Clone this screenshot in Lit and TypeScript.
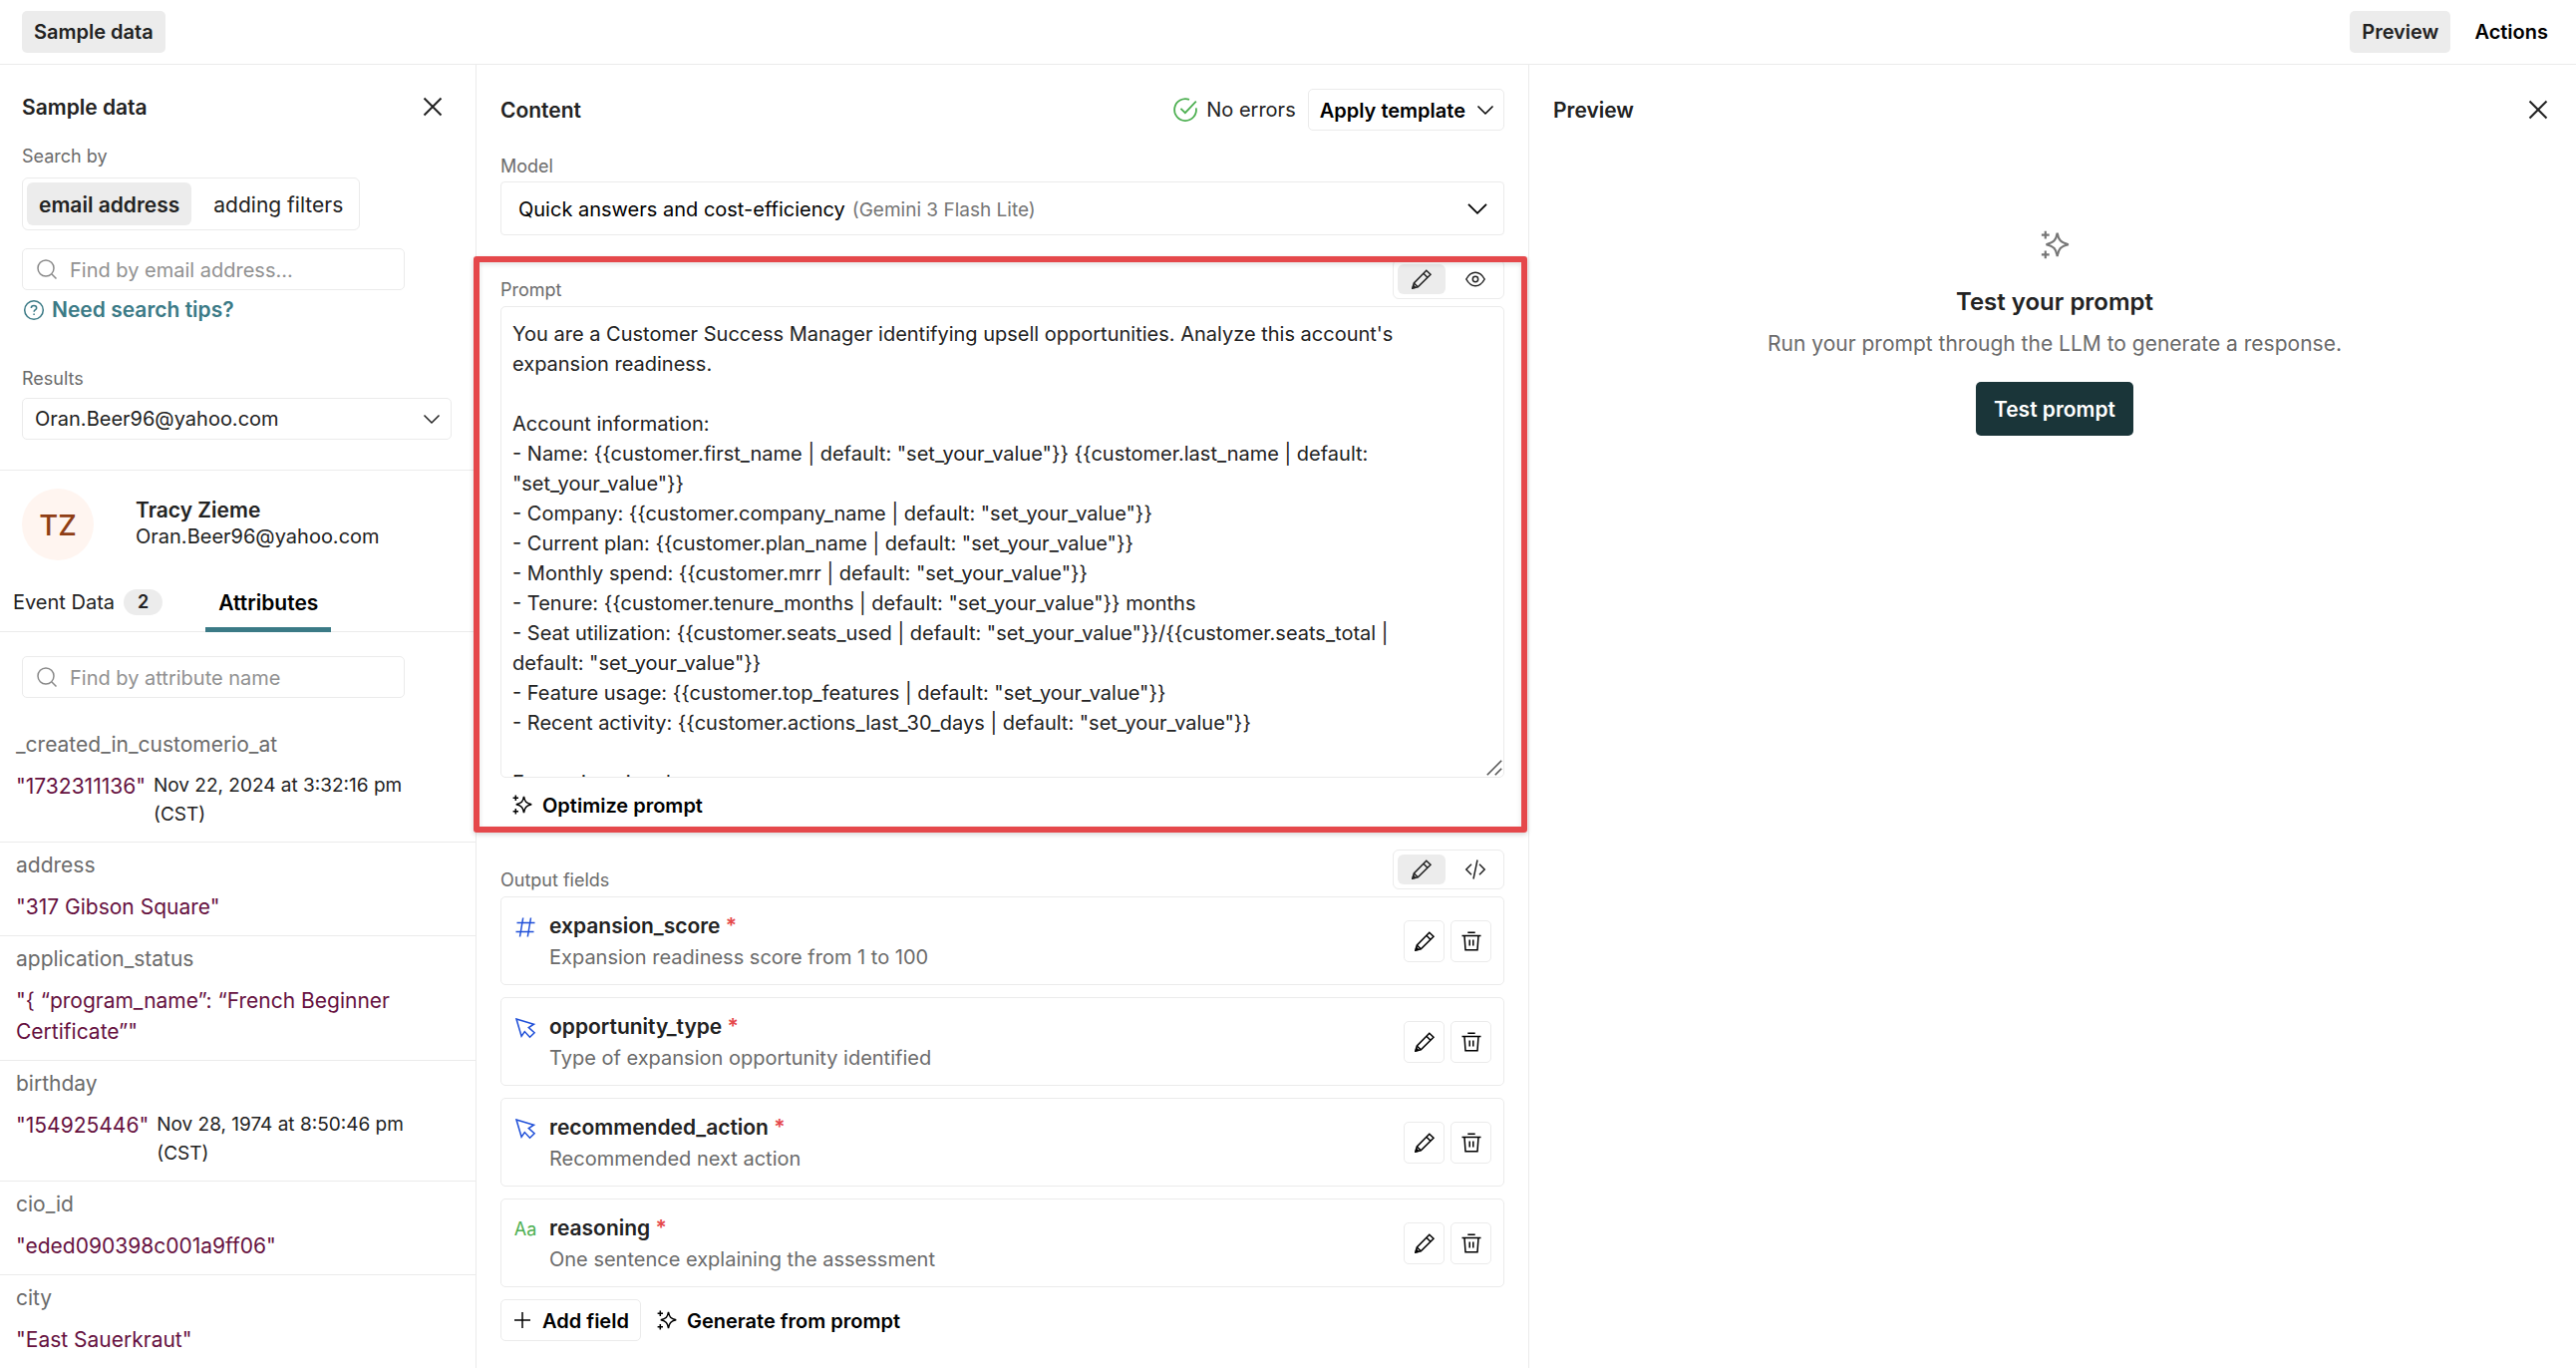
import { LitElement, html, css, svg, nothing } from "lit";
import { customElement } from "lit/decorators.js";
import { classMap } from "lit/directives/class-map.js";

const icons = {
  close: svg`<path d="M1.500 1.500l17 17M18.500 1.500l-17 17" stroke-width="2"/>`,
  chevron: svg`<path d="M2.500 6.500l7.500 7.500 7.500-7.500"/>`,
  search: svg`<circle cx="9" cy="9" r="8"/><path d="M15 15l4.500 4.500"/>`,
  help: svg`<circle cx="10" cy="10" r="9.300"/><path d="M7.300 8c0-1.500 1.200-2.500 2.700-2.500s2.700 1 2.700 2.400c0 1.700-2.600 1.900-2.600 3.900"/><path d="M10.100 13.600v1.300"/>`,
  check: svg`<path d="M13.300 1.600A9.100 9.100 0 1 0 19 8.600"/><path d="M6.200 9l3.700 3.700L19 3"/>`,
  pencil: svg`<path d="M1 19l1.300-5L14.800 1.300l4.200 4L6.300 17.800z"/><path d="M11.900 4.300l4 4M2.300 14l4 3.800"/><path d="M1 19l.7-2.600 1.900 1.900z" fill="currentColor"/>`,
  eye: svg`<path d="M.8 10C3 6 6 3.300 10 3.300S17 6 19.200 10C17 14 14 16.700 10 16.700S3 14 .8 10z"/><circle cx="10" cy="10" r="2.700"/>`,
  code: svg`<path d="M6 4.800L.8 10 6 15.200M14 4.800l5.200 5.200-5.200 5.200M12 .5L8 19.500"/>`,
  trash: svg`<path d="M6.300 1.200h7.400M.5 4.500h19M3 4.500l1 14.300h12l1-14.300"/><path d="M8.200 8.500v6M11.800 8.500v6"/>`,
  sparkle: svg`<path d="M11.500 1.800c.9 5 2.200 6.600 7.700 8-5.500 1.400-6.800 3-7.700 8.200-.9-5.200-2.200-6.800-7.700-8.200 5.500-1.400 6.800-3 7.700-8z"/><path d="M3.300.5v5.400M.6 3.200H6M3.300 14.100v5.400M.6 16.800H6"/>`,
  plus: svg`<path d="M10 2v16M2 10h16"/>`,
  hash: svg`<path d="M7.700.5L4.500 19.500M15.500.5l-3.200 19M1.500 5.600h18M.5 14.400h18"/>`,
  cursor: svg`<path d="M1 1l17.500 5.200-5.200 3.300 5.800 5.200-4.600 4.500-5.200-5.600-3.200 4.600z"/>`,
  grip: svg`<path d="M1 19L19 1M11 19l8-8"/>`,
};

const icon = (name: keyof typeof icons, size = "md") =>
  html`<svg class="icon ${size}" viewBox="0 0 20 20" aria-hidden="true">${icons[name]}</svg>`;

interface Attribute {
  name: string;
  value: string;
  date?: string;
}

const attributes: Attribute[] = [
  { name: "_created_in_customerio_at", value: '"1732311136"', date: "Nov 22, 2024 at 3:32:16 pm (CST)" },
  { name: "address", value: '"317 Gibson Square"' },
  { name: "application_status", value: '"{ “program_name”: “French Beginner Certificate”"' },
  { name: "birthday", value: '"154925446"', date: "Nov 28, 1974 at 8:50:46 pm (CST)" },
  { name: "cio_id", value: '"eded090398c001a9ff06"' },
  { name: "city", value: '"East Sauerkraut"' },
];

const fields = [
  { type: "number", name: "expansion_score", description: "Expansion readiness score from 1 to 100" },
  { type: "choice", name: "opportunity_type", description: "Type of expansion opportunity identified" },
  { type: "choice", name: "recommended_action", description: "Recommended next action" },
  { type: "text", name: "reasoning", description: "One sentence explaining the assessment" },
];

const promptText = `You are a Customer Success Manager identifying upsell opportunities. Analyze this account's expansion readiness.

Account information:
- Name: {{customer.first_name | default: "set_your_value"}} {{customer.last_name | default: "set_your_value"}}
- Company: {{customer.company_name | default: "set_your_value"}}
- Current plan: {{customer.plan_name | default: "set_your_value"}}
- Monthly spend: {{customer.mrr | default: "set_your_value"}}
- Tenure: {{customer.tenure_months | default: "set_your_value"}} months
- Seat utilization: {{customer.seats_used | default: "set_your_value"}}/{{customer.seats_total | default: "set_your_value"}}
- Feature usage: {{customer.top_features | default: "set_your_value"}}
- Recent activity: {{customer.actions_last_30_days | default: "set_your_value"}}

Expansion signals:`;

const base = css`
  * {
    box-sizing: border-box;
  }
  h2, h3, p, dl, dt, dd {
    margin: 0;
    font: inherit;
  }
  button, input, select, textarea {
    margin: 0;
    padding: 0;
    border: 0;
    background: none;
    color: inherit;
    font: inherit;
  }
  button {
    cursor: pointer;
    white-space: nowrap;
  }
  .icon {
    flex: none;
    width: 20px;
    height: 20px;
    fill: none;
    stroke: currentColor;
    stroke-width: 1.5;
    overflow: visible;
  }
  .icon.sm {
    width: 16px;
    height: 16px;
    stroke-width: 2;
  }
  .icon.lg {
    width: 24px;
    height: 24px;
  }
  .icon.xl {
    width: 29px;
    height: 29px;
  }
  .title {
    padding-top: 2px;
    font-size: 21px;
    font-weight: 600;
    line-height: 30px;
  }
  .label {
    display: block;
    color: #6b6b6b;
    font-size: 18px;
    line-height: 24px;
  }
  .close {
    display: flex;
    padding: 4px;
  }
  .btn {
    display: inline-flex;
    align-items: center;
    gap: 10px;
    height: 42px;
    padding: 0 11px;
    border: 1px solid transparent;
    border-radius: 5px;
    color: #000;
    font-size: 20px;
    font-weight: 600;
  }
  .btn span {
    padding-top: 2px;
  }
  .btn.outlined {
    border-color: #ebebeb;
  }
  .btn.selected {
    background: #ececec;
    color: #222;
  }
  .segments {
    display: inline-flex;
    gap: 10px;
    padding: 4px;
    border: 1px solid #ebebeb;
    border-radius: 6px;
  }
  .segment {
    display: flex;
    align-items: center;
    justify-content: center;
    height: 43px;
    padding: 2px 12px 0;
    border-radius: 6px;
    font-size: 21px;
  }
  .segment.selected {
    background: #ececec;
    font-weight: 600;
  }
`;

@customElement("sample-panel")
export class SamplePanel extends LitElement {
  static styles = [
    base,
    css`
      :host {
        display: block;
        border-right: 1px solid #ebebeb;
      }
      .lookup {
        display: flex;
        flex-direction: column;
        align-items: flex-start;
        padding: 26px 24px 30px 22px;
        border-bottom: 1px solid #ebebeb;
      }
      .head {
        display: flex;
        align-items: center;
        justify-content: space-between;
        align-self: stretch;
        margin-bottom: 22px;
        padding-right: 5px;
      }
      .segments {
        margin: 9px 0 18px;
      }
      .search {
        display: flex;
        align-items: center;
        gap: 13px;
        width: 384px;
        max-width: 100%;
        height: 42px;
        padding: 0 14px;
        border: 1px solid #ebebeb;
        border-radius: 5px;
        color: #8a8a8a;
      }
      .search input {
        flex: 1;
        min-width: 0;
        padding-top: 2px;
        outline: none;
      }
      .search input::placeholder {
        color: #919191;
        opacity: 1;
      }
      .help {
        display: flex;
        align-items: center;
        gap: 8px;
        margin: 5px 2px 42px;
        color: #3b7a86;
        font-size: 21px;
        font-weight: 600;
        line-height: 30px;
        text-decoration: none;
      }
      .picker {
        display: grid;
        align-items: center;
        align-self: stretch;
        margin-top: 7px;
        border: 1px solid #ebebeb;
        border-radius: 5px;
      }
      .picker select {
        grid-area: 1 / 1;
        height: 40px;
        padding: 0 40px 0 12px;
        appearance: none;
      }
      .picker .icon {
        grid-area: 1 / 1;
        justify-self: end;
        margin-right: 9px;
        pointer-events: none;
      }
      .person {
        display: flex;
        align-items: center;
        gap: 42px;
        padding: 18px 22px 17px;
        line-height: 27px;
      }
      .identity {
        padding-bottom: 2px;
      }
      .avatar {
        display: grid;
        place-items: center;
        width: 72px;
        height: 72px;
        border-radius: 50%;
        background: #fff5f0;
        color: #8f3e15;
        font-size: 29px;
        font-weight: 500;
      }
      .name {
        font-size: 21px;
        font-weight: 600;
      }
      .tabs {
        display: flex;
        gap: 43px;
        padding: 0 13px;
        border-bottom: 1px solid #ebebeb;
      }
      .tab {
        display: flex;
        align-items: center;
        gap: 9px;
        height: 55px;
        border-bottom: 5px solid transparent;
        margin-bottom: -1px;
      }
      .tab.selected {
        padding-inline: 13px;
        border-color: #3b7a86;
        color: #000;
        font-size: 21px;
        font-weight: 600;
      }
      .badge {
        padding: 0 14px;
        border-radius: 13px;
        background: #ececec;
        font-size: 18px;
        font-weight: 600;
        line-height: 26px;
      }
      .filter {
        padding: 24px 22px;
      }
      .attribute {
        padding: 7px 40px 13px 16px;
        border-bottom: 1px solid #ebebeb;
        font-size: 21px;
        line-height: 31px;
      }
      .attribute:last-child {
        padding-bottom: 8px;
        border-bottom: 0;
      }
      .attribute dt {
        margin-bottom: 11px;
        color: #6b6b6b;
      }
      .attribute dd {
        display: flex;
        gap: 8px;
      }
      .value {
        color: #66113f;
      }
      .date {
        font-size: 19px;
        line-height: 29px;
      }
    `,
  ];

  render() {
    return html`
      <section class="lookup">
        <div class="head">
          <h2 class="title">Sample data</h2>
          <button class="close" aria-label="Close sample data">${icon("close")}</button>
        </div>
        <span class="label" id="search-by">Search by</span>
        <div class="segments" role="group" aria-labelledby="search-by">
          <button class="segment selected" aria-pressed="true">email address</button>
          <button class="segment" aria-pressed="false">adding filters</button>
        </div>
        <label class="search">
          ${icon("search")}
          <input type="search" placeholder="Find by email address..." aria-label="Find by email address" />
        </label>
        <a class="help" href="#search-tips">${icon("help")}<span>Need search tips?</span></a>
        <label class="label" for="results">Results</label>
        <div class="picker">
          <select id="results">
            <option>Oran.Beer96@yahoo.com</option>
          </select>
          ${icon("chevron")}
        </div>
      </section>
      <section>
        <div class="person">
          <span class="avatar">TZ</span>
          <div class="identity">
            <p class="name">Tracy Zieme</p>
            <p>Oran.Beer96@yahoo.com</p>
          </div>
        </div>
        <div class="tabs" role="tablist">
          <button class="tab" role="tab" aria-selected="false">
            <span>Event Data</span><span class="badge">2</span>
          </button>
          <button class="tab selected" role="tab" aria-selected="true">Attributes</button>
        </div>
        <div class="filter">
          <label class="search">
            ${icon("search")}
            <input type="search" placeholder="Find by attribute name" aria-label="Find by attribute name" />
          </label>
        </div>
        <dl>
          ${attributes.map(
            (a) => html`
              <div class="attribute">
                <dt>${a.name}</dt>
                <dd>
                  <span class="value">${a.value}</span>
                  ${a.date ? html`<span class="date">${a.date}</span>` : nothing}
                </dd>
              </div>
            `,
          )}
        </dl>
      </section>
    `;
  }
}

@customElement("content-panel")
export class ContentPanel extends LitElement {
  static styles = [
    base,
    css`
      :host {
        display: flex;
        flex-direction: column;
        gap: 24px;
        min-width: 0;
        padding: 24px;
        border-right: 1px solid #ebebeb;
      }
      .head {
        display: flex;
        align-items: center;
      }
      .status {
        display: flex;
        align-items: center;
        gap: 9px;
        margin: 0 12px 0 auto;
      }
      .status .icon {
        color: #4caf50;
      }
      .head .btn .icon {
        margin-right: -3px;
      }
      .model {
        display: flex;
        align-items: center;
        gap: 7px;
        height: 54px;
        margin-top: 3px;
        padding: 0 14px 0 17px;
        border: 1px solid #ebebeb;
        border-radius: 4px;
        color: #000;
      }
      .model select,
      .vendor {
        padding-top: 2px;
      }
      .model select {
        appearance: none;
        field-sizing: content;
      }
      .vendor {
        flex: 1;
        color: #757575;
        font-size: 19px;
      }
      .bar {
        display: flex;
        align-items: flex-end;
        justify-content: space-between;
        height: 47px;
        padding-bottom: 4px;
      }
      .bar .segments {
        align-self: flex-start;
        gap: 6px;
      }
      .bar .segment {
        width: 48px;
        height: 30px;
        padding: 0;
      }
      .prompt {
        position: relative;
      }
      .highlight {
        position: absolute;
        inset: -3px -23px -7px -27px;
        z-index: 1;
        border: 6px solid #e5484b;
        border-radius: 3px;
        box-shadow: 0 2px 5px rgb(0 0 0 / 16%), inset 0 2px 5px rgb(0 0 0 / 12%);
        pointer-events: none;
      }
      .editor {
        position: relative;
        display: flex;
        margin-bottom: 6px;
      }
      .editor textarea {
        flex: 1;
        height: 473px;
        padding: 12px 48px 0 11px;
        border: 1px solid #ebebeb;
        border-radius: 5px;
        line-height: 30px;
        outline: none;
        resize: none;
        scrollbar-width: none;
        overflow: hidden;
      }
      .editor .icon {
        position: absolute;
        right: 2px;
        bottom: 2px;
        color: #555;
      }
      .fields {
        display: grid;
        gap: 12px;
      }
      .field {
        display: flex;
        align-items: center;
        gap: 6px;
        padding: 12px;
        border: 1px solid #ebebeb;
        border-radius: 5px;
        line-height: 30px;
      }
      .kind {
        display: grid;
        place-items: center;
        align-self: flex-start;
        width: 24px;
        height: 36px;
        margin-right: 6px;
        color: #1f4fd8;
        font-size: 18px;
      }
      .kind.text {
        color: #4caf50;
      }
      .info {
        flex: 1;
        display: grid;
        gap: 1px;
        padding-top: 2px;
      }
      .name {
        font-size: 21px;
        font-weight: 600;
      }
      .required {
        color: #e5484b;
      }
      .description {
        color: #6b6b6b;
      }
      .tool {
        display: grid;
        place-items: center;
        width: 41px;
        height: 42px;
        border: 1px solid #ebebeb;
        border-radius: 5px;
        color: #000;
      }
      .actions {
        display: flex;
        gap: 4px;
        margin-top: 12px;
      }
    `,
  ];

  private kindIcon(type: string) {
    if (type === "text") return "Aa";
    return icon(type === "number" ? "hash" : "cursor");
  }

  render() {
    return html`
      <header class="head">
        <h2 class="title">Content</h2>
        <span class="status">${icon("check", "lg")}No errors</span>
        <button class="btn outlined"><span>Apply template</span>${icon("chevron")}</button>
      </header>

      <section>
        <label class="label" for="model">Model</label>
        <div class="model">
          <select id="model">
            <option>Quick answers and cost-efficiency</option>
          </select>
          <span class="vendor">(Gemini 3 Flash Lite)</span>
          ${icon("chevron", "lg")}
        </div>
      </section>

      <section class="prompt">
        <div class="bar">
          <label class="label" for="prompt">Prompt</label>
          <div class="segments">
            <button class="segment selected" aria-label="Edit prompt" aria-pressed="true">${icon("pencil")}</button>
            <button class="segment" aria-label="View prompt" aria-pressed="false">${icon("eye")}</button>
          </div>
        </div>
        <div class="editor">
          <textarea id="prompt" spellcheck="false" .value=${promptText}></textarea>
          ${icon("grip", "sm")}
        </div>
        <button class="btn">${icon("sparkle")}<span>Optimize prompt</span></button>
        <div class="highlight"></div>
      </section>

      <section>
        <div class="bar">
          <h3 class="label">Output fields</h3>
          <div class="segments">
            <button class="segment selected" aria-label="Edit fields" aria-pressed="true">${icon("pencil")}</button>
            <button class="segment" aria-label="View code" aria-pressed="false">${icon("code")}</button>
          </div>
        </div>
        <div class="fields">
          ${fields.map(
            (f) => html`
              <article class="field">
                <span class=${classMap({ kind: true, text: f.type === "text" })}>${this.kindIcon(f.type)}</span>
                <div class="info">
                  <p class="name">${f.name} <span class="required">*</span></p>
                  <p class="description">${f.description}</p>
                </div>
                <button class="tool" aria-label="Edit ${f.name}">${icon("pencil")}</button>
                <button class="tool" aria-label="Delete ${f.name}">${icon("trash")}</button>
              </article>
            `,
          )}
        </div>
        <div class="actions">
          <button class="btn outlined">${icon("plus")}<span>Add field</span></button>
          <button class="btn">${icon("sparkle")}<span>Generate from prompt</span></button>
        </div>
      </section>
    `;
  }
}

@customElement("preview-panel")
export class PreviewPanel extends LitElement {
  static styles = [
    base,
    css`
      :host {
        display: block;
        min-width: 0;
        padding: 29px 24px;
      }
      .head {
        display: flex;
        align-items: center;
        justify-content: space-between;
      }
      .empty {
        display: flex;
        flex-direction: column;
        align-items: center;
        margin-top: 105px;
        padding-left: 4px;
        text-align: center;
      }
      .empty .icon {
        color: #777;
      }
      .headline {
        margin: 25px 0 9px;
        font-size: 24px;
        font-weight: 600;
        line-height: 36px;
      }
      .hint {
        color: #6b6b6b;
        font-size: 21px;
        line-height: 30px;
      }
      .run {
        height: 54px;
        margin-top: 23px;
        padding: 0 18px;
        border-radius: 5px;
        background: #1a3539;
        color: #fff;
        font-size: 21px;
        font-weight: 600;
      }
    `,
  ];

  render() {
    return html`
      <header class="head">
        <h2 class="title">Preview</h2>
        <button class="close" aria-label="Close preview">${icon("close")}</button>
      </header>
      <div class="empty">
        ${icon("sparkle", "xl")}
        <h3 class="headline">Test your prompt</h3>
        <p class="hint">Run your prompt through the LLM to generate a response.</p>
        <button class="run">Test prompt</button>
      </div>
    `;
  }
}

@customElement("app-root")
export class AppRoot extends LitElement {
  static styles = [
    base,
    css`
      :host {
        display: flex;
        flex-direction: column;
        min-height: 100vh;
        background: #fff;
        color: #222;
        font-family: Inter, "Liberation Sans", sans-serif;
        font-size: 20px;
      }
      .topbar {
        display: flex;
        align-items: center;
        gap: 12px;
        padding: 11px 16px 11px 22px;
        border-bottom: 1px solid #ebebeb;
      }
      .topbar .btn:first-child {
        margin-right: auto;
      }
      .panels {
        flex: 1;
        display: grid;
        grid-template-columns: 478px minmax(0, 1056fr) minmax(0, 1050fr);
      }
    `,
  ];

  render() {
    return html`
      <header class="topbar">
        <button class="btn selected">Sample data</button>
        <button class="btn selected">Preview</button>
        <button class="btn">Actions</button>
      </header>
      <main class="panels">
        <sample-panel></sample-panel>
        <content-panel></content-panel>
        <preview-panel></preview-panel>
      </main>
    `;
  }
}
